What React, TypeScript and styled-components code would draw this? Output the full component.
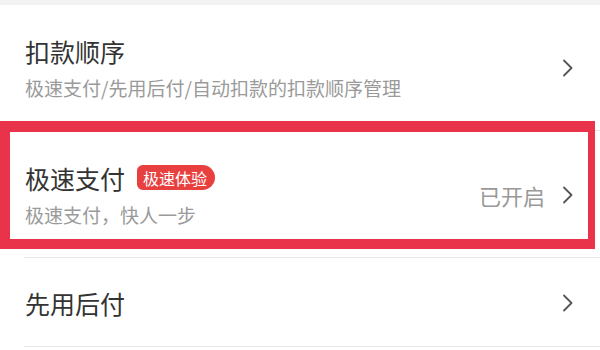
import React from "react";
import styled, { createGlobalStyle } from "styled-components";

const Global = createGlobalStyle`
  html, body { margin: 0; padding: 0; background: #ffffff; }
  body { font-family: "Noto Sans CJK SC", "Noto Sans", sans-serif; }
`;

const Page = styled.div`
  width: 600px;
  height: 350px;
  overflow: hidden;
  background: #ffffff;
  display: flex;
  flex-direction: column;
`;

const TopBand = styled.div`
  height: 5px;
  background: #f2f2f2;
  flex: none;
`;

const Row = styled.div<{ $h: number; $highlight?: boolean }>`
  position: relative;
  flex: none;
  height: ${(p) => p.$h}px;
  display: flex;
  align-items: center;
  padding: 0 26px 0 25px;
  box-sizing: border-box;
  &::before {
    content: "";
    position: absolute;
    left: 24px;
    right: 0;
    bottom: 0;
    height: 1px;
    background: #e6e6e6;
  }
  ${(p) =>
    p.$highlight &&
    `
    &::after {
      content: "";
      position: absolute;
      left: 0;
      right: 5px;
      top: -10px;
      bottom: 9px;
      border-style: solid;
      border-color: #e9334b;
      border-width: 11px 7px 10px 10px;
      pointer-events: none;
      z-index: 2;
    }
  `}
`;

const Texts = styled.div`
  flex: 1;
  display: flex;
  flex-direction: column;
  gap: 11px;
`;

const TitleLine = styled.div`
  display: flex;
  align-items: center;
  gap: 12px;
`;

const Title = styled.div`
  font-size: 25px;
  line-height: 28px;
  color: #333333;
`;

const Badge = styled.span`
  display: inline-flex;
  align-items: center;
  height: 25px;
  padding: 0 8px 0 6px;
  background: #e8403f;
  color: #ffffff;
  font-size: 16px;
  border-radius: 6px 13px 13px 6px;
`;

const Sub = styled.div`
  font-size: 19px;
  line-height: 23px;
  color: #9a9a9a;
`;

const Right = styled.div`
  display: flex;
  align-items: center;
  gap: 17px;
`;

const Status = styled.span`
  font-size: 22px;
  color: #999999;
`;

const Chevron = () => (
  <svg width="12" height="18" viewBox="0 0 12 18">
    <path d="M2 1.5 L9.5 9 L2 16.5" fill="none" stroke="#555" strokeWidth="1.8" strokeLinecap="round" strokeLinejoin="round" />
  </svg>
);

export default function App() {
  return (
    <Page>
      <Global />
      <TopBand />
      <Row $h={126}>
        <Texts>
          <Title>扣款顺序</Title>
          <Sub>极速支付/先用后付/自动扣款的扣款顺序管理</Sub>
        </Texts>
        <Right>
          <Chevron />
        </Right>
      </Row>
      <Row $h={127} $highlight>
        <Texts>
          <TitleLine>
            <Title>极速支付</Title>
            <Badge>极速体验</Badge>
          </TitleLine>
          <Sub>极速支付，快人一步</Sub>
        </Texts>
        <Right>
          <Status>已开启</Status>
          <Chevron />
        </Right>
      </Row>
      <Row $h={89}>
        <Texts>
          <Title>先用后付</Title>
        </Texts>
        <Right>
          <Chevron />
        </Right>
      </Row>
    </Page>
  );
}
